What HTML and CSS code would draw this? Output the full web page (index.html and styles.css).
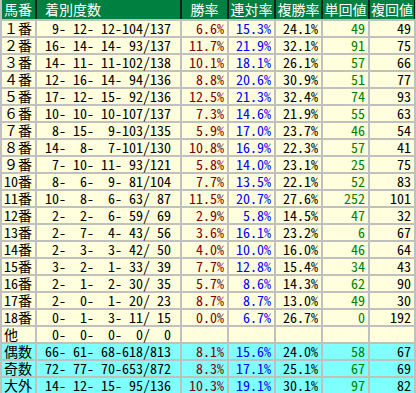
FILE: index.html
```html
<!DOCTYPE html>
<html lang="ja">
<head>
<meta charset="utf-8">
<title>馬番別成績</title>
<link rel="stylesheet" href="styles.css">
</head>
<body>
<div class="tbl">
  <div class="row head">
    <div class="c1">馬番</div><div class="c2">着別度数</div><div class="hc">勝率</div><div class="hc">連対率</div><div class="hc">複勝率</div><div class="hc">単回値</div><div class="hc">複回値</div>
  </div>
  <div class="row"><div class="c1">１番</div><div class="c2">  9- 12- 12-104/137</div><div class="n win">6.6%</div><div class="n ren">15.3%</div><div class="n">24.1%</div><div class="n tan">49</div><div class="n">49</div></div>
  <div class="row"><div class="c1">２番</div><div class="c2"> 16- 14- 14- 93/137</div><div class="n win">11.7%</div><div class="n ren">21.9%</div><div class="n">32.1%</div><div class="n tan">91</div><div class="n">75</div></div>
  <div class="row"><div class="c1">３番</div><div class="c2"> 14- 11- 11-102/138</div><div class="n win">10.1%</div><div class="n ren">18.1%</div><div class="n">26.1%</div><div class="n tan">57</div><div class="n">66</div></div>
  <div class="row"><div class="c1">４番</div><div class="c2"> 12- 16- 14- 94/136</div><div class="n win">8.8%</div><div class="n ren">20.6%</div><div class="n">30.9%</div><div class="n tan">51</div><div class="n">77</div></div>
  <div class="row"><div class="c1">５番</div><div class="c2"> 17- 12- 15- 92/136</div><div class="n win">12.5%</div><div class="n ren">21.3%</div><div class="n">32.4%</div><div class="n tan">74</div><div class="n">93</div></div>
  <div class="row"><div class="c1">６番</div><div class="c2"> 10- 10- 10-107/137</div><div class="n win">7.3%</div><div class="n ren">14.6%</div><div class="n">21.9%</div><div class="n tan">55</div><div class="n">63</div></div>
  <div class="row"><div class="c1">７番</div><div class="c2">  8- 15-  9-103/135</div><div class="n win">5.9%</div><div class="n ren">17.0%</div><div class="n">23.7%</div><div class="n tan">46</div><div class="n">54</div></div>
  <div class="row"><div class="c1">８番</div><div class="c2"> 14-  8-  7-101/130</div><div class="n win">10.8%</div><div class="n ren">16.9%</div><div class="n">22.3%</div><div class="n tan">57</div><div class="n">41</div></div>
  <div class="row"><div class="c1">９番</div><div class="c2">  7- 10- 11- 93/121</div><div class="n win">5.8%</div><div class="n ren">14.0%</div><div class="n">23.1%</div><div class="n tan">25</div><div class="n">75</div></div>
  <div class="row"><div class="c1">10番</div><div class="c2">  8-  6-  9- 81/104</div><div class="n win">7.7%</div><div class="n ren">13.5%</div><div class="n">22.1%</div><div class="n tan">52</div><div class="n">83</div></div>
  <div class="row"><div class="c1">11番</div><div class="c2"> 10-  8-  6- 63/ 87</div><div class="n win">11.5%</div><div class="n ren">20.7%</div><div class="n">27.6%</div><div class="n tan">252</div><div class="n">101</div></div>
  <div class="row"><div class="c1">12番</div><div class="c2">  2-  2-  6- 59/ 69</div><div class="n win">2.9%</div><div class="n ren">5.8%</div><div class="n">14.5%</div><div class="n tan">47</div><div class="n">32</div></div>
  <div class="row"><div class="c1">13番</div><div class="c2">  2-  7-  4- 43/ 56</div><div class="n win">3.6%</div><div class="n ren">16.1%</div><div class="n">23.2%</div><div class="n tan">6</div><div class="n">67</div></div>
  <div class="row"><div class="c1">14番</div><div class="c2">  2-  3-  3- 42/ 50</div><div class="n win">4.0%</div><div class="n ren">10.0%</div><div class="n">16.0%</div><div class="n tan">46</div><div class="n">64</div></div>
  <div class="row"><div class="c1">15番</div><div class="c2">  3-  2-  1- 33/ 39</div><div class="n win">7.7%</div><div class="n ren">12.8%</div><div class="n">15.4%</div><div class="n tan">34</div><div class="n">43</div></div>
  <div class="row"><div class="c1">16番</div><div class="c2">  2-  1-  2- 30/ 35</div><div class="n win">5.7%</div><div class="n ren">8.6%</div><div class="n">14.3%</div><div class="n tan">62</div><div class="n">90</div></div>
  <div class="row"><div class="c1">17番</div><div class="c2">  2-  0-  1- 20/ 23</div><div class="n win">8.7%</div><div class="n ren">8.7%</div><div class="n">13.0%</div><div class="n tan">49</div><div class="n">30</div></div>
  <div class="row"><div class="c1">18番</div><div class="c2">  0-  1-  3- 11/ 15</div><div class="n win">0.0%</div><div class="n ren">6.7%</div><div class="n">26.7%</div><div class="n tan">0</div><div class="n">192</div></div>
  <div class="row"><div class="c1">他</div><div class="c2">  0-  0-  0-  0/  0</div><div class="n win"></div><div class="n ren"></div><div class="n"></div><div class="n tan"></div><div class="n"></div></div>
  <div class="row sum"><div class="c1">偶数</div><div class="c2"> 66- 61- 68-618/813</div><div class="n win">8.1%</div><div class="n ren">15.6%</div><div class="n">24.0%</div><div class="n tan">58</div><div class="n">67</div></div>
  <div class="row sum"><div class="c1">奇数</div><div class="c2"> 72- 77- 70-653/872</div><div class="n win">8.3%</div><div class="n ren">17.1%</div><div class="n">25.1%</div><div class="n tan">67</div><div class="n">69</div></div>
  <div class="row sum"><div class="c1">大外</div><div class="c2"> 14- 12- 15- 95/136</div><div class="n win">10.3%</div><div class="n ren">19.1%</div><div class="n">30.1%</div><div class="n tan">97</div><div class="n">82</div></div>
</div>
</body>
</html>
```
FILE: styles.css
```css
html, body {
  margin: 0;
  padding: 0;
  overflow: hidden;
  background: #c0c0c0;
}

.tbl {
  display: flex;
  flex-direction: column;
  gap: 2px;
  padding: 0 2px;
  background: #c0c0c0;
  width: 416px;
  box-sizing: border-box;
  font-family: "Noto Sans Mono CJK JP", "Noto Sans CJK JP", "DejaVu Sans Mono", monospace;
  font-size: 14px;
  color: #000;
}

.row {
  display: grid;
  grid-template-columns: 33px 143px 45px 45px 45px 45px 44px;
  column-gap: 2px;
  height: 15px;
  line-height: 15px;
}

.row > div {
  background: #ffffdd;
  white-space: pre;
}

.row.sum > div {
  background: #80ffff;
}

.row.head {
  height: 19px;
  line-height: 19px;
  background: #1e1e1e;
  margin: 0 -1px 0 0;
}

.row.head > div {
  background: #008040;
  color: #fff;
}

.c1 {
  padding-left: 2px;
}

.c2 {
  text-align: right;
  padding-right: 9px;
}

.head .c2 {
  text-align: left;
  padding-left: 8px;
}

.hc {
  text-align: center;
}

.n {
  text-align: right;
  padding-right: 3px;
}

.win { color: #800000; }
.ren { color: #0000ff; }
.tan { color: #008000; }
```
